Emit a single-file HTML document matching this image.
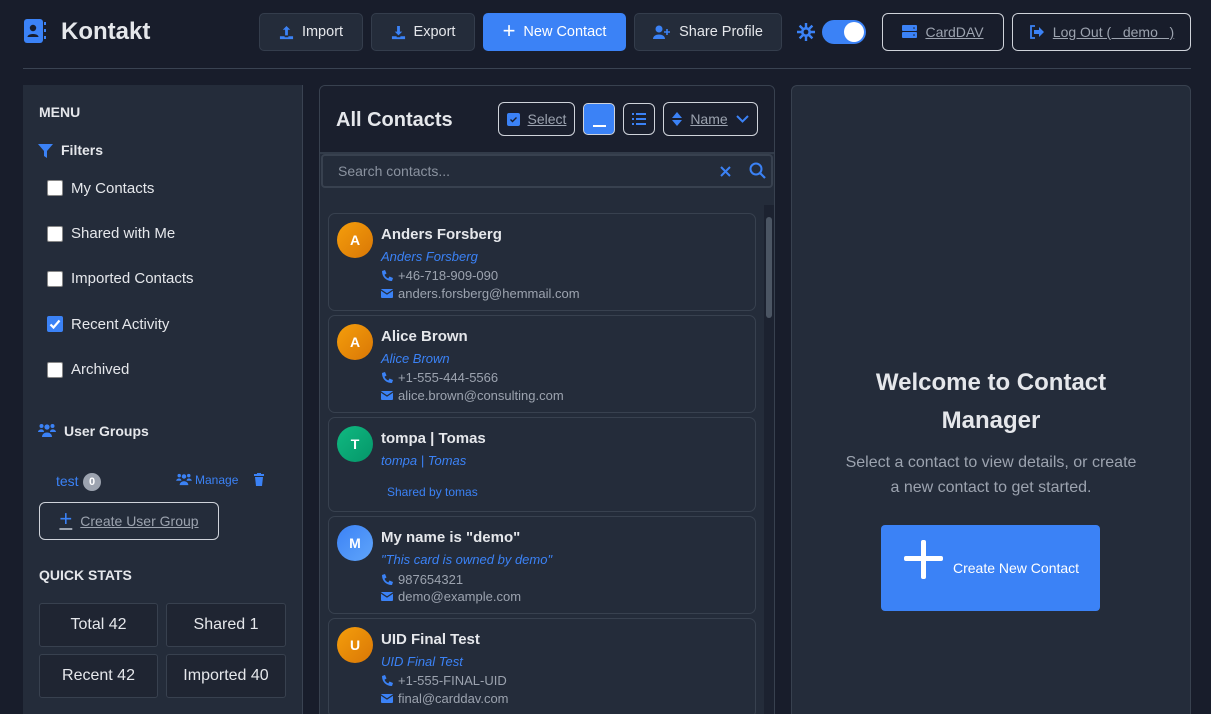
<!DOCTYPE html>
<html><head><meta charset="utf-8"><style>
*{box-sizing:border-box;margin:0;padding:0}
html,body{width:1211px;height:714px;overflow:hidden}
body{background:#181d2b;font-family:"Liberation Sans",sans-serif;color:#e5e7eb;position:relative}
.a{position:absolute}
.btn{position:absolute;top:13px;height:38px;border-radius:5px;background:#242c3a;border:1px solid #343d4c;display:flex;align-items:center;justify-content:center;gap:8px;font-size:14.5px;color:#e5e7eb}
.obtn{position:absolute;border:1px solid #cfd3da;border-radius:6px;display:flex;align-items:center;justify-content:center;gap:8px;font-size:14px;color:#9ca3af;text-decoration:underline}
.chk{position:absolute;left:47px;width:16px;height:16px;background:#fff;border:1px solid #888;border-radius:2px}
.lbl{position:absolute;left:71px;font-size:15px;color:#e5e7eb}
.card{position:absolute;left:328px;width:428px;border:1px solid #38414f;border-radius:7px;background:#242c3a}
.av{position:absolute;left:8px;top:8px;width:36px;height:36px;border-radius:50%;color:#fff;font-weight:bold;font-size:14px;display:flex;align-items:center;justify-content:center}
.nm{position:absolute;left:52px;top:12px;font-weight:bold;font-size:15px;color:#e5e7eb}
.sub{position:absolute;left:52px;top:35px;font-style:italic;font-size:13px;color:#3b82f6}
.ln{position:absolute;left:52px;font-size:13px;color:#9ca3af;display:flex;align-items:center;gap:5px}
.stat{position:absolute;width:119px;height:44px;border:1px solid #38414f;border-radius:3px;background:#1f2532;display:flex;align-items:center;justify-content:center;font-size:16px;color:#e5e7eb}
</style></head><body>
<svg class="a" style="left:23px;top:18px" width="24" height="26" viewBox="0 0 24 26"><rect x="1" y="1" width="19" height="24" rx="3" fill="#3b82f6"/><circle cx="10" cy="10" r="3.2" fill="#181d2b"/><path d="M4.5 19c0-4 11-4 11 0z" fill="#181d2b"/><rect x="21" y="4" width="2" height="3" fill="#3b82f6"/><rect x="21" y="11" width="2" height="3" fill="#3b82f6"/><rect x="21" y="18" width="2" height="3" fill="#3b82f6"/></svg>
<div class="a" style="left:61px;top:18px;font-size:24px;font-weight:bold;color:#e5e7eb">Kontakt</div>
<div class="btn" style="left:259px;width:104px"><svg width="15" height="15" viewBox="0 0 16 16"><path d="M8 1l-4 4h2.5v6h3V5H12z M1 12h5v1h4v-1h5v3H1z" fill="#3b82f6"/></svg>Import</div>
<div class="btn" style="left:371px;width:104px"><svg width="15" height="15" viewBox="0 0 16 16"><path d="M6.5 1h3v6H12l-4 4-4-4h2.5z M1 12h5v1h4v-1h5v3H1z" fill="#3b82f6"/></svg>Export</div>
<div class="btn" style="left:483px;width:143px;background:#3b82f6;border-color:#3b82f6;color:#fff"><span style="font-size:22px;font-weight:300;margin-top:-3px">+</span>New Contact</div>
<div class="btn" style="left:634px;width:148px"><svg width="18" height="15" viewBox="0 0 18 15"><circle cx="6" cy="4" r="3.5" fill="#3b82f6"/><path d="M0 14c0-6 12-6 12 0z" fill="#3b82f6"/><path d="M14 4v6M11 7h6" stroke="#3b82f6" stroke-width="1.6"/></svg>Share Profile</div>
<svg class="a" style="left:797px;top:23px" width="18" height="18" viewBox="0 0 18 18"><g stroke="#3b82f6" stroke-width="2.4"><path d="M9 0v18M0 9h18M2.6 2.6l12.8 12.8M15.4 2.6L2.6 15.4"/></g><circle cx="9" cy="9" r="5" fill="#3b82f6"/><circle cx="9" cy="9" r="2.4" fill="#181d2b"/></svg>
<div class="a" style="left:822px;top:20px;width:44px;height:24px;border-radius:12px;background:#3b82f6"><div class="a" style="right:2px;top:2px;width:20px;height:20px;border-radius:50%;background:#fff"></div></div>
<div class="obtn" style="left:882px;top:13px;width:122px;height:38px"><svg width="15" height="14" viewBox="0 0 15 14"><rect x="0" y="0" width="15" height="6" rx="1" fill="#3b82f6"/><rect x="0" y="7" width="15" height="6" rx="1" fill="#3b82f6"/><circle cx="12" cy="3" r="0.8" fill="#181d2b"/><circle cx="12" cy="10" r="0.8" fill="#181d2b"/></svg>CardDAV</div>
<div class="obtn" style="left:1012px;top:13px;width:179px;height:38px"><svg width="16" height="14" viewBox="0 0 16 14"><path d="M6 1H2v12h4" stroke="#3b82f6" stroke-width="1.8" fill="none"/><path d="M5 5h5V2l5 5-5 5V9H5z" fill="#3b82f6"/></svg><span>Log Out (&nbsp;&nbsp;&nbsp;demo&nbsp;&nbsp;&nbsp;)</span></div>
<div class="a" style="left:23px;top:68px;width:1168px;height:1px;background:#3a4352"></div>

<div class="a" style="left:23px;top:85px;width:280px;height:629px;background:#242c3a;border-right:1px solid #3a4352"></div>
<div class="a" style="left:39px;top:104px;font-weight:bold;font-size:14px">MENU</div>
<svg class="a" style="left:38px;top:144px" width="15" height="14" viewBox="0 0 15 14"><path d="M0 0h15L9 7v7L6 12V7z" fill="#3b82f6"/></svg>
<div class="a" style="left:61px;top:142px;font-weight:bold;font-size:14px">Filters</div>
<div class="chk" style="top:180px"></div><div class="lbl" style="top:180px">My Contacts</div>
<div class="chk" style="top:226px"></div><div class="lbl" style="top:225px">Shared with Me</div>
<div class="chk" style="top:271px"></div><div class="lbl" style="top:270px">Imported Contacts</div>
<div class="chk" style="top:316px;background:#3b82f6;border-color:#3b82f6"><svg width="14" height="14" viewBox="0 0 14 14"><path d="M2.5 7.5l3 3 6-7" stroke="#fff" stroke-width="2.2" fill="none"/></svg></div><div class="lbl" style="top:316px">Recent Activity</div>
<div class="chk" style="top:362px"></div><div class="lbl" style="top:361px">Archived</div>
<svg class="a" style="left:38px;top:423px" width="18" height="15" viewBox="0 0 18 15"><circle cx="9" cy="4" r="2.6" fill="#3b82f6"/><circle cx="3.5" cy="3" r="2" fill="#3b82f6"/><circle cx="14.5" cy="3" r="2" fill="#3b82f6"/><path d="M4 14c0-6 10-6 10 0z M0 9c0-3 6-4 6 0z M12 9c0-4 6-3 6 0z" fill="#3b82f6"/></svg>
<div class="a" style="left:64px;top:423px;font-weight:bold;font-size:14px">User Groups</div>
<div class="a" style="left:56px;top:473px;font-size:14px;color:#3b82f6">test</div>
<div class="a" style="left:83px;top:473px;width:18px;height:18px;border-radius:50%;background:#9ca3af;color:#fff;font-size:11px;font-weight:bold;display:flex;align-items:center;justify-content:center">0</div>
<svg class="a" style="left:176px;top:473px" width="16" height="13" viewBox="0 0 18 15"><circle cx="9" cy="4" r="2.6" fill="#3b82f6"/><circle cx="3.5" cy="3" r="2" fill="#3b82f6"/><circle cx="14.5" cy="3" r="2" fill="#3b82f6"/><path d="M4 14c0-6 10-6 10 0z M0 9c0-3 6-4 6 0z M12 9c0-4 6-3 6 0z" fill="#3b82f6"/></svg>
<div class="a" style="left:195px;top:473px;font-size:12px;color:#3b82f6">Manage</div>
<svg class="a" style="left:254px;top:473px" width="10" height="13" viewBox="0 0 10 13"><rect x="0" y="1" width="10" height="2" fill="#3b82f6"/><rect x="3" y="0" width="4" height="2" fill="#3b82f6"/><path d="M1 4h8l-1 9H2z" fill="#3b82f6"/></svg>
<div class="obtn" style="left:39px;top:502px;width:180px;height:38px;color:#9ca3af;font-size:14px"><span style="color:#3b82f6;font-size:22px;text-decoration:none;margin-top:-4px">+</span>Create User Group</div>
<div class="a" style="left:39px;top:567px;font-weight:bold;font-size:14px">QUICK STATS</div>
<div class="stat" style="left:39px;top:603px">Total 42</div>
<div class="stat" style="left:166px;top:603px;width:120px">Shared 1</div>
<div class="stat" style="left:39px;top:654px">Recent 42</div>
<div class="stat" style="left:166px;top:654px;width:120px">Imported 40</div>

<div class="a" style="left:319px;top:85px;width:456px;height:640px;background:#242c3a;border:1px solid #38414f;border-radius:6px;overflow:hidden">
 <div class="a" style="left:0;top:0;width:456px;height:68px;background:#1a1f2d;border-bottom:2px solid #323b49"></div>
</div>
<div class="a" style="left:336px;top:109px;font-size:20px;font-weight:bold">All Contacts</div>
<div class="obtn" style="left:498px;top:102px;width:77px;height:34px"><svg width="13" height="13" viewBox="0 0 13 13"><rect width="13" height="13" rx="2" fill="#3b82f6"/><path d="M3.5 6.5l2 2 4-4" stroke="#181d2b" stroke-width="1.4" fill="none"/></svg>Select</div>
<div class="a" style="left:583px;top:103px;width:32px;height:32px;border-radius:5px;background:#3b82f6;border:1px solid #cfd3da"><div class="a" style="left:9px;top:21px;width:13px;height:1.5px;background:#fff"></div></div>
<div class="obtn" style="left:623px;top:103px;width:32px;height:32px"><svg width="14" height="12" viewBox="0 0 14 12"><g fill="#3b82f6"><rect x="0" y="0" width="2" height="2"/><rect x="4" y="0" width="10" height="2"/><rect x="0" y="5" width="2" height="2"/><rect x="4" y="5" width="10" height="2"/><rect x="0" y="10" width="2" height="2"/><rect x="4" y="10" width="10" height="2"/></g></svg></div>
<div class="obtn" style="left:663px;top:102px;width:95px;height:34px"><svg width="10" height="14" viewBox="0 0 10 14"><path d="M5 0l5 6H0z M0 8h10l-5 6z" fill="#3b82f6"/></svg>Name<svg width="13" height="8" viewBox="0 0 13 8"><path d="M1 1l5.5 5.5L12 1" stroke="#3b82f6" stroke-width="2" fill="none"/></svg></div>
<div class="a" style="left:321px;top:154px;width:452px;height:34px;border:2px solid #38414f;border-radius:4px;background:#242c3a"></div>
<div class="a" style="left:338px;top:163px;font-size:14px;color:#8b93a0">Search contacts...</div>
<svg class="a" style="left:720px;top:166px" width="11" height="11" viewBox="0 0 11 11"><path d="M1 1l9 9M10 1l-9 9" stroke="#3b82f6" stroke-width="2"/></svg>
<svg class="a" style="left:749px;top:162px" width="17" height="17" viewBox="0 0 17 17"><circle cx="7" cy="7" r="5.5" stroke="#3b82f6" stroke-width="2" fill="none"/><path d="M11 11l5 5" stroke="#3b82f6" stroke-width="2.2"/></svg>
<div class="a" style="left:764px;top:205px;width:10px;height:510px;background:#1c2230"></div>
<div class="a" style="left:766px;top:217px;width:6px;height:101px;border-radius:3px;background:#4b5563"></div>

<div class="card" style="top:213px;height:98px"><div class="av" style="background:linear-gradient(135deg,#f59e0b,#d97706)">A</div><div class="nm">Anders Forsberg</div><div class="sub">Anders Forsberg</div>
<div class="ln" style="top:54px"><svg width="12" height="12" viewBox="0 0 12 12"><path d="M1 1l3-1 1.5 3.5-2 1.2a7 7 0 003.8 3.8l1.2-2L12 8l-1 3C5 11 1 7 1 1z" fill="#3b82f6"/></svg>+46-718-909-090</div>
<div class="ln" style="top:72px"><svg width="12" height="9" viewBox="0 0 12 9"><rect width="12" height="9" rx="1" fill="#3b82f6"/><path d="M0 1l6 4 6-4" stroke="#242c3a" stroke-width="1.2" fill="none"/></svg>anders.forsberg@hemmail.com</div></div>

<div class="card" style="top:315px;height:98px"><div class="av" style="background:linear-gradient(135deg,#f59e0b,#d97706)">A</div><div class="nm">Alice Brown</div><div class="sub">Alice Brown</div>
<div class="ln" style="top:54px"><svg width="12" height="12" viewBox="0 0 12 12"><path d="M1 1l3-1 1.5 3.5-2 1.2a7 7 0 003.8 3.8l1.2-2L12 8l-1 3C5 11 1 7 1 1z" fill="#3b82f6"/></svg>+1-555-444-5566</div>
<div class="ln" style="top:72px"><svg width="12" height="9" viewBox="0 0 12 9"><rect width="12" height="9" rx="1" fill="#3b82f6"/><path d="M0 1l6 4 6-4" stroke="#242c3a" stroke-width="1.2" fill="none"/></svg>alice.brown@consulting.com</div></div>

<div class="card" style="top:417px;height:95px"><div class="av" style="background:linear-gradient(135deg,#10b981,#059669)">T</div><div class="nm">tompa | Tomas</div><div class="sub">tompa | Tomas</div>
<div class="a" style="left:58px;top:67px;font-size:12px;color:#3b82f6">Shared by tomas</div></div>

<div class="card" style="top:516px;height:98px"><div class="av" style="background:linear-gradient(135deg,#3b82f6,#60a5fa)">M</div><div class="nm">My name is "demo"</div><div class="sub">"This card is owned by demo"</div>
<div class="ln" style="top:55px"><svg width="12" height="12" viewBox="0 0 12 12"><path d="M1 1l3-1 1.5 3.5-2 1.2a7 7 0 003.8 3.8l1.2-2L12 8l-1 3C5 11 1 7 1 1z" fill="#3b82f6"/></svg>987654321</div>
<div class="ln" style="top:72px"><svg width="12" height="9" viewBox="0 0 12 9"><rect width="12" height="9" rx="1" fill="#3b82f6"/><path d="M0 1l6 4 6-4" stroke="#242c3a" stroke-width="1.2" fill="none"/></svg>demo@example.com</div></div>

<div class="card" style="top:618px;height:100px"><div class="av" style="background:linear-gradient(135deg,#f59e0b,#d97706)">U</div><div class="nm">UID Final Test</div><div class="sub">UID Final Test</div>
<div class="ln" style="top:54px"><svg width="12" height="12" viewBox="0 0 12 12"><path d="M1 1l3-1 1.5 3.5-2 1.2a7 7 0 003.8 3.8l1.2-2L12 8l-1 3C5 11 1 7 1 1z" fill="#3b82f6"/></svg>+1-555-FINAL-UID</div>
<div class="ln" style="top:72px"><svg width="12" height="9" viewBox="0 0 12 9"><rect width="12" height="9" rx="1" fill="#3b82f6"/><path d="M0 1l6 4 6-4" stroke="#242c3a" stroke-width="1.2" fill="none"/></svg>final@carddav.com</div></div>

<div class="a" style="left:791px;top:85px;width:400px;height:640px;background:#242c3a;border:1px solid #38414f;border-radius:6px"></div>
<div class="a" style="left:791px;top:364px;width:400px;text-align:center;font-size:24px;font-weight:bold;line-height:38px;color:#e5e7eb">Welcome to Contact<br>Manager</div>
<div class="a" style="left:791px;top:450px;width:400px;text-align:center;font-size:16px;line-height:25px;color:#9ca3af">Select a contact to view details, or create<br>a new contact to get started.</div>
<div class="a" style="left:881px;top:525px;width:219px;height:86px;background:#3b82f6;border-radius:4px"></div>
<div class="a" style="left:921px;top:540px;width:5px;height:39px;background:#fff;border-radius:2px"></div>
<div class="a" style="left:904px;top:556px;width:39px;height:5px;background:#fff;border-radius:2px"></div>
<div class="a" style="left:953px;top:560px;font-size:14px;color:#fff">Create New Contact</div>
</body></html>
